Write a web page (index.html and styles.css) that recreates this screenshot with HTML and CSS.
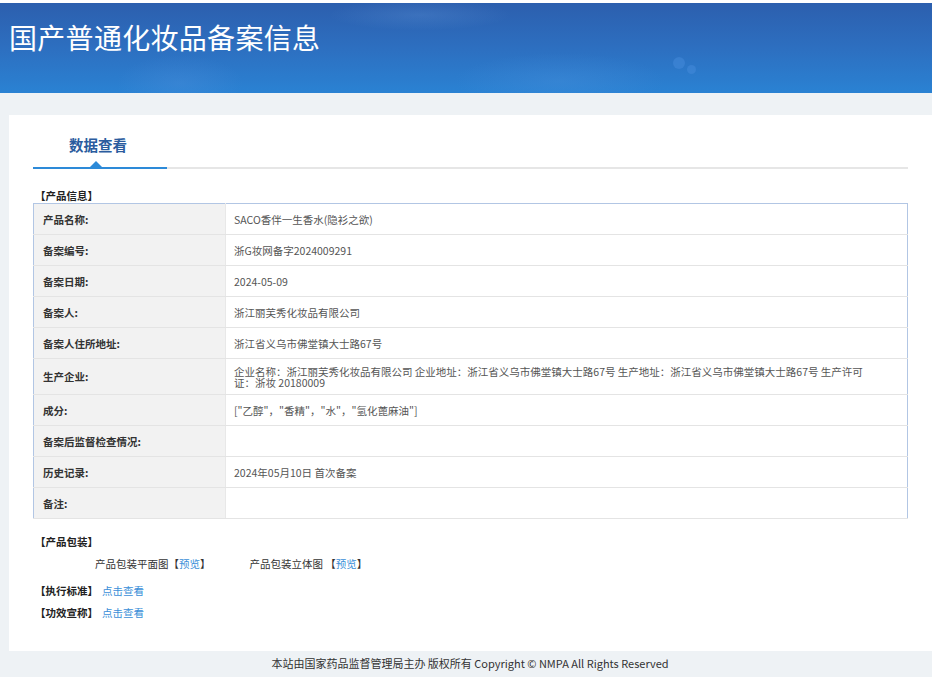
FILE: index.html
```html
<!DOCTYPE html>
<html lang="zh-CN">
<head>
<meta charset="utf-8">
<title>国产普通化妆品备案信息</title>
<link rel="stylesheet" href="styles.css">
</head>
<body>
<div class="page">
  <header class="banner">
    <h1 class="banner-title">国产普通化妆品备案信息</h1>
    <span class="dot dot-a"></span>
    <span class="dot dot-b"></span>
  </header>
  <main class="main">
    <section class="card">
      <div class="tabs">
        <div class="tab active">数据查看<span class="caret"></span></div>
      </div>
      <div class="sec-title">【产品信息】</div>
      <table class="info">
        <tr><th>产品名称:</th><td>SACO香伴一生香水(隐衫之欲)</td></tr>
        <tr><th>备案编号:</th><td>浙G妆网备字2024009291</td></tr>
        <tr><th>备案日期:</th><td>2024-05-09</td></tr>
        <tr><th>备案人:</th><td>浙江丽芙秀化妆品有限公司</td></tr>
        <tr><th>备案人住所地址:</th><td>浙江省义乌市佛堂镇大士路67号</td></tr>
        <tr class="tall"><th>生产企业:</th><td class="wrap">企业名称：浙江丽芙秀化妆品有限公司 企业地址：浙江省义乌市佛堂镇大士路67号 生产地址：浙江省义乌市佛堂镇大士路67号 生产许可证：浙妆 20180009</td></tr>
        <tr><th>成分:</th><td>["乙醇"，"香精"，"水"，"氢化蓖麻油"]</td></tr>
        <tr><th>备案后监督检查情况:</th><td></td></tr>
        <tr><th>历史记录:</th><td>2024年05月10日 首次备案</td></tr>
        <tr><th>备注:</th><td></td></tr>
      </table>
      <div class="sec-title pack-title">【产品包装】</div>
      <div class="pack-row">
        <span class="pack-item">产品包装平面图【<a class="link">预览</a>】</span>
        <span class="pack-item">产品包装立体图 【<a class="link">预览</a>】</span>
      </div>
      <div class="line-item"><span class="bold">【执行标准】</span><a class="link">点击查看</a></div>
      <div class="line-item"><span class="bold">【功效宣称】</span><a class="link">点击查看</a></div>
    </section>
  </main>
  <footer class="footer">本站由国家药品监督管理局主办 版权所有 Copyright © NMPA All Rights Reserved</footer>
</div>
</body>
</html>
```

FILE: styles.css
```css
* { box-sizing: border-box; }
html, body { margin: 0; padding: 0; background: #fff; }
body {
  font-family: "Noto Sans CJK SC", "Noto Sans", "Liberation Sans", sans-serif;
  font-size: 10.5px;
  color: #333;
}
.page {
  width: 932px;
  padding-top: 3px;
}
.banner {
  position: relative;
  height: 90px;
  background:
    radial-gradient(ellipse 150px 40px at 560px 78px, rgba(80,150,225,0.28), rgba(80,150,225,0) 70%),
    radial-gradient(ellipse 90px 40px at 180px 80px, rgba(90,150,225,0.25), rgba(90,150,225,0) 70%),
    radial-gradient(ellipse 130px 22px at 420px 12px, rgba(120,170,230,0.2), rgba(120,170,230,0) 70%),
    linear-gradient(180deg, #2c5fae 0%, #2d6fc0 50%, #2a82d3 100%);
  overflow: hidden;
}
.banner-title {
  margin: 0;
  padding: 16px 0 0 9px;
  font-size: 28px;
  font-weight: normal;
  line-height: 36px;
  color: #fff;
  letter-spacing: 0.3px;
}
.dot {
  position: absolute;
  border-radius: 50%;
  background: rgba(70,140,220,0.5);
}
.dot-a { left: 673px; top: 54px; width: 12px; height: 12px; }
.dot-b { left: 687px; top: 62px; width: 9px; height: 9px; }
.main {
  background: #eef2f5;
  padding: 22px 0 0 9px;
}
.card {
  background: #fff;
  height: 536px;
  padding: 0 24px 0 24px;
}
.tabs {
  display: flex;
  border-bottom: 2px solid #e6e6e6;
}
.tab {
  position: relative;
  width: 134px;
  padding: 21px 0 13px 36px;
  line-height: 18px;
  font-size: 14.5px;
  font-weight: bold;
  color: #2b5c9e;
  border-bottom: 2px solid #2d8ad8;
  margin-bottom: -2px;
}
.caret {
  position: absolute;
  left: 57px;
  bottom: 0;
  width: 0;
  height: 0;
  border-left: 6px solid transparent;
  border-right: 6px solid transparent;
  border-bottom: 6px solid #2d8ad8;
}
.sec-title {
  margin-top: 20px;
  padding-left: 2px;
  font-weight: bold;
  font-size: 10.5px;
  color: #222;
  line-height: 14px;
}
.info {
  width: 100%;
  border-collapse: collapse;
  border: 1px solid #b2c6e4;
  border-bottom-color: #8fb6e8;
}
.info th, .info td {
  height: 31px;
  border-bottom: 1px solid #e4e4e4;
  text-align: left;
  vertical-align: middle;
  font-size: 10.5px;
  padding: 0;
}
.info th {
  width: 192px;
  background: #f2f2f2;
  padding-left: 9px;
  color: #333;
  font-weight: bold;
  border-right: 1px solid #e8e8e8;
}
.info td {
  padding-left: 8px;
  color: #555;
  background: #fff;
}
.info tr.tall th, .info tr.tall td { height: 36px; }
.info td.wrap {
  line-height: 11px;
  padding-right: 42px;
}
.pack-title { margin-top: 16px; }
.pack-row {
  display: flex;
  gap: 39px;
  padding-left: 62px;
  margin-top: 8px;
  line-height: 14px;
  color: #333;
}
.line-item {
  margin-top: 8px;
  line-height: 14px;
  padding-left: 2px;
}
.pack-row + .line-item { margin-top: 13px; }
.bold { font-weight: bold; color: #222; margin-right: 4px; }
.link { color: #3b8fd8; text-decoration: none; }
.footer {
  background: #eef2f5;
  height: 26px;
  line-height: 24px;
  text-align: center;
  color: #333;
  font-size: 11px;
  padding-left: 8px;
}
```
